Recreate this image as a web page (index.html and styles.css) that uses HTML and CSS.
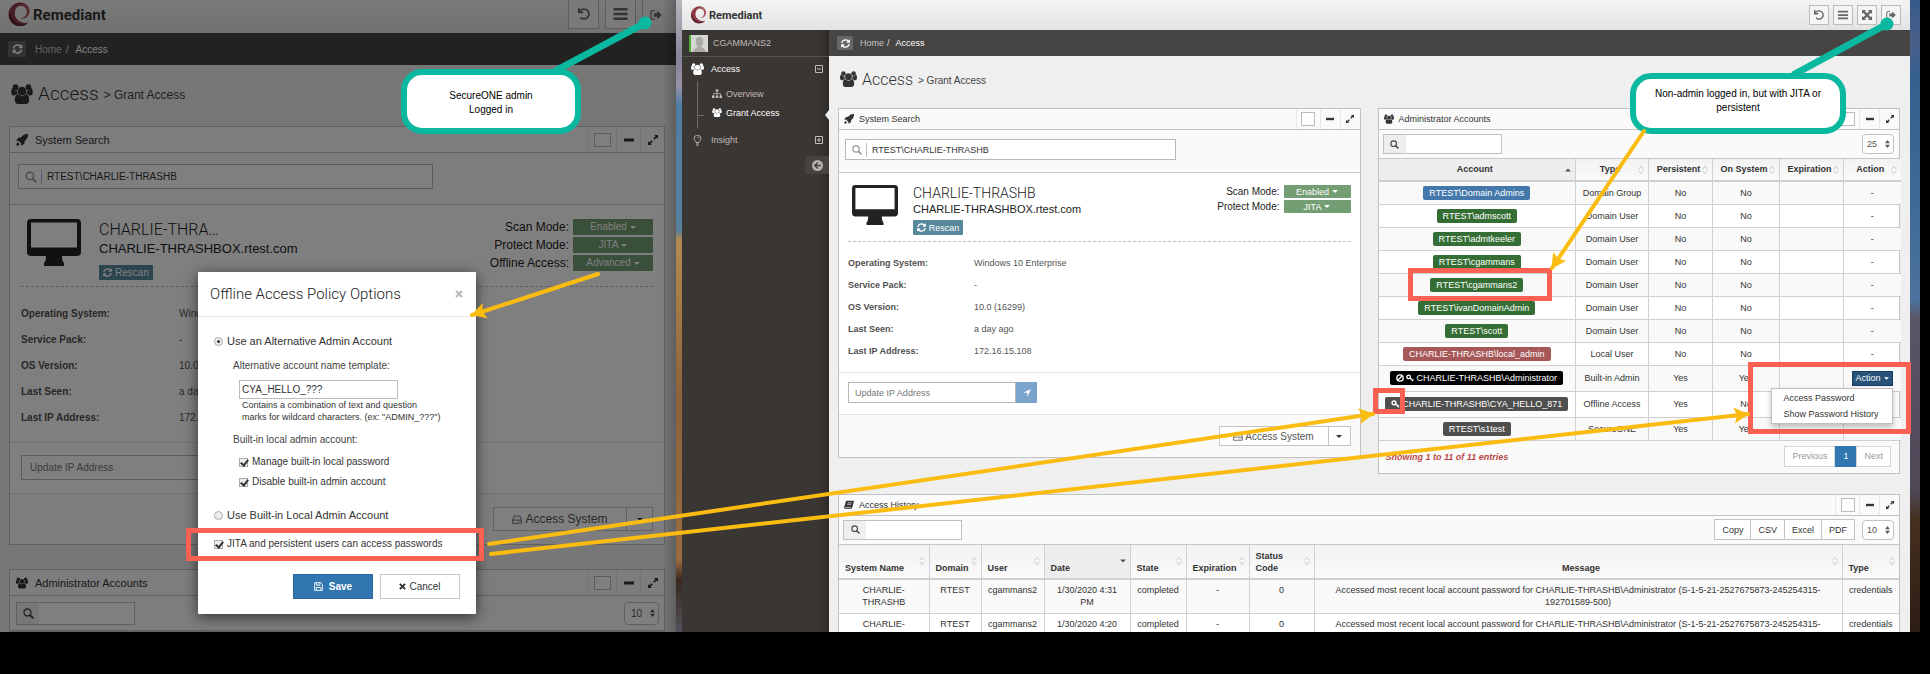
FILE: index.html
```html
<!DOCTYPE html>
<html lang="en">
<head>
<meta charset="utf-8">
<title>Remediant SecureONE - Grant Access</title>
<link rel="stylesheet" href="styles.css">
</head>
<body>
<svg class="sprite" aria-hidden="true">
  <symbol id="i-logo" viewBox="0 0 44 50">
    <path fill="#8d3a44" d="M40 9C34 0 22-1 13 4 3 10-1 20 2 31c3 11 13 18 24 17 6 0 11-3 14-7-5 2-10 1-14-1-9-4-14-12-12-21C15 10 24 4 32 5c3 1 6 2 8 4z"/>
    <path fill="#5e2a33" d="M2 31c3 11 13 18 24 17 6 0 11-3 14-7-7 4-16 4-23 0C9 37 6 30 7 22c-4 2-6 5-5 9z"/>
    <path fill="#a8505a" d="M40 9c4 5 4 12 1 17-3 6-10 9-16 7 6-1 10-4 12-9 2-6 0-12-5-15-4-2-8-2-12 1 3-6 14-8 20-1z"/>
  </symbol>
  <symbol id="i-users" viewBox="0 0 30 28">
    <circle cx="6" cy="4.500" r="4"/><circle cx="24" cy="4.500" r="4"/><circle cx="15" cy="10" r="6"/>
    <path d="M5 23c0-5 1-8.500 5-8.500 1 1 3 2.500 5 2.500s4-1.500 5-2.500c4 0 5 3.500 5 8.500 0 3-2 5-4 5H9c-2 0-4-2-4-5z"/>
    <path d="M0 12c0-3 .5-6 2.200-6 1 1 2.300 3 4 3 .5 0 1-.1 1.700-.3-.3 2 .3 4 1.400 5.600-2 0-3.600.7-4.900 1.700H3c-2 0-3-1.200-3-4zM30 12c0-3-.5-6-2.200-6-1 1-2.300 3-4 3-.5 0-1-.1-1.700-.3.3 2-.3 4-1.400 5.600 2 0 3.600.7 4.900 1.700H27c2 0 3-1.200 3-4z"/>
  </symbol>
  <symbol id="i-sync" viewBox="0 0 512 512"><path d="M370.720 133.280C339.458 104.008 298.888 87.962 255.848 88c-77.458.068-144.328 53.178-162.791 126.850-1.344 5.363-6.122 9.150-11.651 9.150H24.103c-7.498 0-13.194-6.807-11.807-14.176C33.933 94.924 134.813 8 256 8c66.448 0 126.791 26.136 171.315 68.685L463.030 40.970C478.149 25.851 504 36.559 504 57.941V192c0 13.255-10.745 24-24 24H345.941c-21.382 0-32.090-25.851-16.971-40.971l41.750-41.749zM32 296h134.059c21.382 0 32.090 25.851 16.971 40.971l-41.750 41.750c31.262 29.273 71.835 45.319 114.876 45.280 77.418-.07 144.315-53.144 162.787-126.849 1.344-5.363 6.122-9.150 11.651-9.150h57.304c7.498 0 13.194 6.807 11.807 14.176C478.067 417.076 377.187 504 256 504c-66.448 0-126.791-26.136-171.315-68.685L48.970 471.030C33.851 486.149 8 475.441 8 454.059V320c0-13.255 10.745-24 24-24z"/></symbol>
  <symbol id="i-undo" viewBox="0 0 512 512"><path d="M212.333 224.333H12c-6.627 0-12-5.373-12-12V12C0 5.373 5.373 0 12 0h48c6.627 0 12 5.373 12 12v78.112C117.773 39.279 184.260 7.470 258.175 8.007c136.906.994 246.448 111.623 246.157 248.532C504.041 393.258 393.120 504 256.333 504c-64.089 0-122.496-24.313-166.510-64.215-5.099-4.622-5.334-12.554-.467-17.420l33.967-33.967c4.474-4.474 11.662-4.717 16.401-.525C170.760 415.336 211.580 432 256.333 432c97.268 0 176-78.716 176-176 0-97.267-78.716-176-176-176-58.496 0-110.280 28.476-142.274 72.333h98.274c6.627 0 12 5.373 12 12v48c0 6.627-5.373 12-12 12z"/></symbol>
  <symbol id="i-bars" viewBox="0 0 14 14"><path d="M0 1h14v2.500H0zM0 5.800h14v2.500H0zM0 10.600h14v2.500H0z"/></symbol>
  <symbol id="i-arrows" viewBox="0 0 14 14"><path d="M0 0h5.500L4 1.700l3 3 3-3L8.500 0H14v5.500l-1.700-1.500-3 3 3 3L14 8.500V14H8.500l1.500-1.700-3-3-3 3L5.500 14H0V8.500L1.700 10l3-3-3-3L0 5.500z"/></symbol>
  <symbol id="i-signout" viewBox="0 0 14 14"><path fill="none" stroke="currentColor" stroke-width="1.400" d="M5.500 2H3C1.700 2 1 2.700 1 4v6c0 1.300.7 2 2 2h2.500"/><path d="M4.500 5H8.500V2L13.800 7 8.500 12V9H4.500z"/></symbol>
  <symbol id="i-rocket" viewBox="0 0 16 16"><path d="M16 0c-4-.2-7 1.200-9.500 4.500L2.800 5 .3 9.200l3-.3 3.800 3.800-.3 3L11 13.200l.5-3.700C14.800 7 16.200 4 16 0zM2.500 11C1 12 .5 13.800.5 15.500 2.200 15.500 4 15 5 13.500z"/></symbol>
  <symbol id="i-search" viewBox="0 0 16 16"><g fill="none" stroke="currentColor" stroke-width="2"><circle cx="6.500" cy="6.500" r="5"/><path stroke-width="2.800" stroke-linecap="round" d="M10.600 10.600 14.200 14.200"/></g></symbol>
  <symbol id="i-desktop" viewBox="0 0 54 47"><path fill-rule="evenodd" d="M4 0h46a4 4 0 0 1 4 4v29a4 4 0 0 1-4 4H35c0 4 1 6 2 7v3H17v-3c1-1 2-3 2-7H4a4 4 0 0 1-4-4V4a4 4 0 0 1 4-4zM4 3.500V28.500H50V3.500z"/></symbol>
  <symbol id="i-expand" viewBox="0 0 14 14"><path d="M8.500 0H14v5.500l-1.900-1.900-3.100 3.100-1.700-1.700 3.100-3.100zM5.500 14H0V8.500l1.900 1.900L5 7.300 6.700 9l-3.100 3.100z"/></symbol>
  <symbol id="i-minus" viewBox="0 0 10 10"><path d="M0 3.500h10v3H0z"/></symbol>
  <symbol id="i-caret" viewBox="0 0 8 4"><path d="M0 0h8L4 4z"/></symbol>
  <symbol id="i-caretup" viewBox="0 0 8 4"><path d="M0 4h8L4 0z"/></symbol>
  <symbol id="i-sort" viewBox="0 0 8 12"><path fill="none" stroke="currentColor" d="M1 5 4 1l3 4M1 7l3 4 3-4"/></symbol>
  <symbol id="i-updown" viewBox="0 0 6 10"><path d="M0 4h6L3 0zM0 6h6L3 10z"/></symbol>
  <symbol id="i-save" viewBox="0 0 14 14"><path fill="none" stroke="currentColor" stroke-width="1.400" d="M1 1h9.500L13 3.500V13H1zM4 1v4h5V1M3.500 13V8.500h7V13"/></symbol>
  <symbol id="i-times" viewBox="0 0 12 12"><path fill="none" stroke="currentColor" stroke-width="3.400" d="M1.500 1.500 10.500 10.500M10.500 1.500 1.500 10.500"/></symbol>
  <symbol id="i-hdd" viewBox="0 0 16 14"><path fill="none" stroke="currentColor" stroke-width="1.300" d="M1 8 3.500 1.500h9L15 8v5H1zM1 8h14M10 10.500h1.200M12.300 10.500h1.200"/></symbol>
  <symbol id="i-nav" viewBox="0 0 14 14"><path d="M14 0 7.500 14V6.500H0z"/></symbol>
  <symbol id="i-book" viewBox="0 0 16 14"><path d="M5 0h9c1.500 0 2 .8 1.700 2L13 11.500c-.2 1-1 1.500-2 1.500H2.500C1 13 0 12 .3 10.500L2.800 2C3.200.8 3.800 0 5 0z"/><path stroke="#fff" fill="none" d="M5.800 3.500h6.500M5 6h6.500M2 10.800h9"/></symbol>
  <symbol id="i-sitemap" viewBox="0 0 16 14"><path d="M6 0h4v4H8.600v2.400H14V10h2v4h-4v-4h.8V7.600H8.600V10H10v4H6v-4h1.400V7.600H3.200V10H4v4H0v-4h2V6.400h5.400V4H6z"/></symbol>
  <symbol id="i-bulb" viewBox="0 0 12 16"><path fill="none" stroke="currentColor" stroke-width="1.300" d="M4 11C4 8.500 1 8 1 5a5 4.500 0 0 1 10 0c0 3-3 3.500-3 6zM4 13h4M4.500 15h3M6 3.500c1 0 2 .5 2 1.500"/></symbol>
  <symbol id="i-circleleft" viewBox="0 0 16 16"><circle cx="8" cy="8" r="8"/><path fill="none" stroke="#464341" stroke-width="2" d="M8.500 3.500 4 8l4.500 4.500M4 8h9"/></symbol>
  <symbol id="i-ban" viewBox="0 0 12 12"><g fill="none" stroke="currentColor" stroke-width="2"><circle cx="6" cy="6" r="4.800"/><path d="M9.500 2.500 2.500 9.500"/></g></symbol>
  <symbol id="i-key" viewBox="0 0 14 13"><path fill="none" stroke="currentColor" stroke-width="2.400" d="M4.500 1.500a3 3 0 1 1 0 6.200 3 3 0 0 1 0-6.200z"/><path fill="none" stroke="currentColor" stroke-width="1.800" d="M6.500 6.500 12.500 12M9 9l2-2M11 11l2-2"/></symbol>
  <symbol id="i-boxminus" viewBox="0 0 8 8"><path fill="none" stroke="currentColor" d="M.5.5h7v7h-7zM2 4h4"/></symbol>
  <symbol id="i-boxplus" viewBox="0 0 8 8"><path fill="none" stroke="currentColor" d="M.5.5h7v7h-7zM2 4h4M4 2v4"/></symbol>
  <symbol id="i-avatar" viewBox="0 0 18 18"><path fill="#d5d5d2" d="M0 0h18v18H0z"/><path fill="#aaa9a6" d="M9 2c3 0 4 2 4 5s-1 4-2 5c0 2 4 2 5 6H2c1-4 5-4 5-6-1-1-2-2-2-5s1-5 4-5z"/></symbol>
</svg>

<main class="desktop">
  <section class="window window--admin" aria-label="SecureONE admin">
    <header class="topbar">
      <a class="brand" href="#"><svg class="brand-mark"><use href="#i-logo"/></svg>Remediant</a>
      <nav class="topbar-actions">
        <button aria-label="Reset"><svg><use href="#i-undo"/></svg></button>
        <button aria-label="Menu"><svg class="wide"><use href="#i-bars"/></svg></button>
        <button class="flat" aria-label="Sign out"><svg><use href="#i-signout"/></svg></button>
      </nav>
    </header>
    <div class="main">
      <div class="ribbon">
        <button class="refresh" aria-label="Refresh"><svg><use href="#i-sync"/></svg></button>
        <a href="#">Home</a><span>/</span><a class="here" href="#">Access</a>
      </div>
      <div class="content">
        <h1 class="page-title"><svg><use href="#i-users"/></svg>Access <small>&gt; Grant Access</small></h1>
        <article class="panel">
          <header class="panel-head">
            <svg><use href="#i-rocket"/></svg><h2>System Search</h2>
            <span class="tool"><input type="checkbox" aria-label="Panel color"></span>
            <button class="tool" aria-label="Collapse"><svg><use href="#i-minus"/></svg></button>
            <button class="tool" aria-label="Expand"><svg><use href="#i-expand"/></svg></button>
          </header>
          <div class="finder"><label class="finder-box"><svg><use href="#i-search"/></svg><input type="text" value="RTEST\CHARLIE-THRASHB" aria-label="System"></label></div>
          <div class="system">
            <div class="system-head">
              <svg class="monitor"><use href="#i-desktop"/></svg>
              <div class="system-name"><h3>CHARLIE-THRA…</h3><p>CHARLIE-THRASHBOX.rtest.com</p><button class="rescan"><svg><use href="#i-sync"/></svg>Rescan</button></div>
              <div class="modes">
                <span>Scan Mode:</span><button>Enabled<svg><use href="#i-caret"/></svg></button>
                <span>Protect Mode:</span><button>JITA<svg><use href="#i-caret"/></svg></button>
                <span>Offline Access:</span><button>Advanced<svg><use href="#i-caret"/></svg></button>
              </div>
            </div>
            <dl class="facts">
              <dt>Operating System:</dt><dd>Windows 10 Enterprise</dd>
              <dt>Service Pack:</dt><dd>-</dd>
              <dt>OS Version:</dt><dd>10.0 (16299)</dd>
              <dt>Last Seen:</dt><dd>a day ago</dd>
              <dt>Last IP Address:</dt><dd>172.16.15.108</dd>
            </dl>
          </div>
          <div class="ip-row"><input type="text" placeholder="Update IP Address" aria-label="Update IP Address"><button aria-label="Send"><svg><use href="#i-nav"/></svg></button></div>
          <footer class="panel-foot"><button class="access"><svg><use href="#i-hdd"/></svg>Access System</button><button class="drop" aria-label="More"><svg><use href="#i-caret"/></svg></button></footer>
        </article>
        <article class="panel">
          <header class="panel-head">
            <svg><use href="#i-users"/></svg><h2>Administrator Accounts</h2>
            <span class="tool"><input type="checkbox" aria-label="Panel color"></span>
            <button class="tool" aria-label="Collapse"><svg><use href="#i-minus"/></svg></button>
            <button class="tool" aria-label="Expand"><svg><use href="#i-expand"/></svg></button>
          </header>
          <div class="toolbar">
            <label class="filter"><span><svg><use href="#i-search"/></svg></span><input type="text" aria-label="Filter"></label>
            <label class="count"><select aria-label="Rows"><option>10</option></select><svg><use href="#i-updown"/></svg></label>
          </div>
        </article>
      </div>
    </div>
    <div class="backdrop"></div>
    <form class="modal" role="dialog" aria-label="Offline Access Policy Options">
      <header><h2>Offline Access Policy Options</h2><button type="button" aria-label="Close"><svg><use href="#i-times"/></svg></button></header>
      <label class="opt opt--main"><input type="radio" name="policy" checked>Use an Alternative Admin Account</label>
      <label class="sub" for="template">Alternative account name template:</label>
      <input class="template" id="template" type="text" value="CYA_HELLO_???">
      <p class="hint">Contains a combination of text and question<br>marks for wildcard characters. (ex: "ADMIN_???")</p>
      <p class="sub">Built-in local admin account:</p>
      <label class="opt opt--nested"><input type="checkbox" checked>Manage built-in local password</label>
      <label class="opt opt--nested"><input type="checkbox" checked>Disable built-in admin account</label>
      <label class="opt opt--second opt--main"><input type="radio" name="policy">Use Built-in Local Admin Account</label>
      <label class="opt opt--jita"><input type="checkbox" checked>JITA and persistent users can access passwords</label>
      <footer><button type="button" class="save"><svg><use href="#i-save"/></svg>Save</button><button type="button" class="cancel"><svg><use href="#i-times"/></svg>Cancel</button></footer>
    </form>
  </section>

  <div class="wallpaper wallpaper--gap"></div>

  <section class="window window--user" aria-label="Non-admin user">
    <header class="topbar">
      <a class="brand" href="#"><svg class="brand-mark"><use href="#i-logo"/></svg>Remediant</a>
      <nav class="topbar-actions">
        <button aria-label="Reset"><svg><use href="#i-undo"/></svg></button>
        <button aria-label="Menu"><svg><use href="#i-bars"/></svg></button>
        <button aria-label="Full screen"><svg><use href="#i-arrows"/></svg></button>
        <button aria-label="Sign out"><svg><use href="#i-signout"/></svg></button>
      </nav>
    </header>
    <aside class="sidebar">
      <div class="user"><svg><use href="#i-avatar"/></svg>CGAMMANS2</div>
      <nav>
        <a class="item on" href="#"><svg><use href="#i-users"/></svg>Access<svg class="toggle"><use href="#i-boxminus"/></svg></a>
        <div class="branch">
          <a href="#"><svg><use href="#i-sitemap"/></svg>Overview</a>
          <a class="on" href="#"><svg><use href="#i-users"/></svg>Grant Access</a>
        </div>
        <a class="item" href="#"><svg class="bulb"><use href="#i-bulb"/></svg>Insight<svg class="toggle"><use href="#i-boxplus"/></svg></a>
      </nav>
      <button class="minify" aria-label="Collapse menu"><svg><use href="#i-circleleft"/></svg></button>
    </aside>
    <div class="main">
      <div class="ribbon">
        <button class="refresh" aria-label="Refresh"><svg><use href="#i-sync"/></svg></button>
        <a href="#">Home</a><span>/</span><a class="here" href="#">Access</a>
      </div>
      <div class="content">
        <h1 class="page-title"><svg><use href="#i-users"/></svg>Access <small>&gt; Grant Access</small></h1>
        <div class="columns">
          <article class="panel">
            <header class="panel-head">
              <svg><use href="#i-rocket"/></svg><h2>System Search</h2>
              <span class="tool"><input type="checkbox" aria-label="Panel color"></span>
              <button class="tool" aria-label="Collapse"><svg><use href="#i-minus"/></svg></button>
              <button class="tool" aria-label="Expand"><svg><use href="#i-expand"/></svg></button>
            </header>
            <div class="finder"><label class="finder-box"><svg><use href="#i-search"/></svg><input type="text" value="RTEST\CHARLIE-THRASHB" aria-label="System"></label></div>
            <div class="system">
              <div class="system-head">
                <svg class="monitor"><use href="#i-desktop"/></svg>
                <div class="system-name"><h3>CHARLIE-THRASHB</h3><p>CHARLIE-THRASHBOX.rtest.com</p><button class="rescan"><svg><use href="#i-sync"/></svg>Rescan</button></div>
                <div class="modes">
                  <span>Scan Mode:</span><button>Enabled<svg><use href="#i-caret"/></svg></button>
                  <span>Protect Mode:</span><button>JITA<svg><use href="#i-caret"/></svg></button>
                </div>
              </div>
              <dl class="facts">
                <dt>Operating System:</dt><dd>Windows 10 Enterprise</dd>
                <dt>Service Pack:</dt><dd>-</dd>
                <dt>OS Version:</dt><dd>10.0 (16299)</dd>
                <dt>Last Seen:</dt><dd>a day ago</dd>
                <dt>Last IP Address:</dt><dd>172.16.15.108</dd>
              </dl>
            </div>
            <div class="ip-row"><input type="text" placeholder="Update IP Address" aria-label="Update IP Address"><button aria-label="Send"><svg><use href="#i-nav"/></svg></button></div>
            <footer class="panel-foot"><button class="access"><svg><use href="#i-hdd"/></svg>Access System</button><button class="drop" aria-label="More"><svg><use href="#i-caret"/></svg></button></footer>
          </article>

          <article class="panel">
            <header class="panel-head">
              <svg><use href="#i-users"/></svg><h2>Administrator Accounts</h2>
              <span class="tool"><input type="checkbox" aria-label="Panel color"></span>
              <button class="tool" aria-label="Collapse"><svg><use href="#i-minus"/></svg></button>
              <button class="tool" aria-label="Expand"><svg><use href="#i-expand"/></svg></button>
            </header>
            <div class="toolbar">
              <label class="filter"><span><svg><use href="#i-search"/></svg></span><input type="text" aria-label="Filter"></label>
              <label class="count"><select aria-label="Rows"><option>25</option></select><svg><use href="#i-updown"/></svg></label>
            </div>
            <table class="grid accounts">
              <colgroup><col class="a1"><col class="a2"><col class="a3"><col class="a4"><col class="a5"><col class="a6"></colgroup>
              <thead><tr><th class="sorted">Account<svg class="up"><use href="#i-caretup"/></svg></th><th>Type<svg><use href="#i-sort"/></svg></th><th>Persistent<svg><use href="#i-sort"/></svg></th><th>On System<svg><use href="#i-sort"/></svg></th><th>Expiration<svg><use href="#i-sort"/></svg></th><th>Action<svg><use href="#i-sort"/></svg></th></tr></thead>
              <tbody>
                <tr><td><span class="tag blue">RTEST\Domain Admins</span></td><td>Domain Group</td><td>No</td><td>No</td><td></td><td>-</td></tr>
                <tr><td><span class="tag green">RTEST\admscott</span></td><td>Domain User</td><td>No</td><td>No</td><td></td><td>-</td></tr>
                <tr><td><span class="tag green">RTEST\admtkeeler</span></td><td>Domain User</td><td>No</td><td>No</td><td></td><td>-</td></tr>
                <tr><td><span class="tag green">RTEST\cgammans</span></td><td>Domain User</td><td>No</td><td>No</td><td></td><td>-</td></tr>
                <tr><td><span class="tag green">RTEST\cgammans2</span></td><td>Domain User</td><td>No</td><td>No</td><td></td><td>-</td></tr>
                <tr><td><span class="tag green">RTEST\ivanDomainAdmin</span></td><td>Domain User</td><td>No</td><td>No</td><td></td><td>-</td></tr>
                <tr><td><span class="tag green">RTEST\scott</span></td><td>Domain User</td><td>No</td><td>No</td><td></td><td>-</td></tr>
                <tr><td><span class="tag red">CHARLIE-THRASHB\local_admin</span></td><td>Local User</td><td>No</td><td>No</td><td></td><td>-</td></tr>
                <tr class="tall"><td><span class="tag black"><svg><use href="#i-ban"/></svg><svg><use href="#i-key"/></svg>CHARLIE-THRASHB\Administrator</span></td><td>Built-in Admin</td><td>Yes</td><td>Yes</td><td></td>
                  <td><div class="action"><button>Action<svg><use href="#i-caret"/></svg></button><div class="menu"><a href="#">Access Password</a><a href="#">Show Password History</a></div></div></td></tr>
                <tr class="tall"><td><span class="tag gray"><svg class="key"><use href="#i-key"/></svg>CHARLIE-THRASHB\CYA_HELLO_871</span></td><td>Offline Access</td><td>Yes</td><td>No</td><td></td><td></td></tr>
                <tr><td><span class="tag gray">RTEST\s1test</span></td><td>SecureONE</td><td>Yes</td><td>Yes</td><td></td><td></td></tr>
              </tbody>
            </table>
            <footer class="table-foot"><em>Showing 1 to 11 of 11 entries</em>
              <nav class="pager"><a href="#">Previous</a><a class="current" href="#">1</a><a href="#">Next</a></nav></footer>
          </article>
        </div>

        <article class="panel">
          <header class="panel-head">
            <svg><use href="#i-book"/></svg><h2>Access History</h2>
            <span class="tool"><input type="checkbox" aria-label="Panel color"></span>
            <button class="tool" aria-label="Collapse"><svg><use href="#i-minus"/></svg></button>
            <button class="tool" aria-label="Expand"><svg><use href="#i-expand"/></svg></button>
          </header>
          <div class="toolbar">
            <label class="filter"><span><svg><use href="#i-search"/></svg></span><input type="text" aria-label="Filter"></label>
            <div class="exports"><button>Copy</button><button>CSV</button><button>Excel</button><button>PDF</button></div>
            <label class="count"><select aria-label="Rows"><option>10</option></select><svg><use href="#i-updown"/></svg></label>
          </div>
          <table class="grid history">
            <colgroup><col class="h1"><col class="h2"><col class="h3"><col class="h4"><col class="h5"><col class="h6"><col class="h7"><col class="h8"><col class="h9"></colgroup>
            <thead><tr><th>System Name<svg><use href="#i-sort"/></svg></th><th>Domain<svg><use href="#i-sort"/></svg></th><th>User<svg><use href="#i-sort"/></svg></th><th class="sorted">Date<svg class="up"><use href="#i-caret"/></svg></th><th>State<svg><use href="#i-sort"/></svg></th><th>Expiration<svg><use href="#i-sort"/></svg></th><th>Status<br>Code<svg><use href="#i-sort"/></svg></th><th class="mid">Message<svg><use href="#i-sort"/></svg></th><th>Type<svg><use href="#i-sort"/></svg></th></tr></thead>
            <tbody>
              <tr><td>CHARLIE-<br>THRASHB</td><td>RTEST</td><td>cgammans2</td><td>1/30/2020 4:31<br>PM</td><td>completed</td><td>-</td><td>0</td><td>Accessed most recent local account password for CHARLIE-THRASHB\Administrator (S-1-5-21-2527675873-245254315-<br>192701589-500)</td><td>credentials</td></tr>
              <tr><td>CHARLIE-</td><td>RTEST</td><td>cgammans2</td><td>1/30/2020 4:20</td><td>completed</td><td>-</td><td>0</td><td>Accessed most recent local account password for CHARLIE-THRASHB\Administrator (S-1-5-21-2527675873-245254315-</td><td>credentials</td></tr>
            </tbody>
          </table>
        </article>
      </div>
    </div>
  </section>

  <div class="wallpaper wallpaper--edge"></div>
</main>

<div class="notes">
  <svg class="note-lines" viewBox="0 0 1930 674" aria-hidden="true">
    <g fill="none" stroke="#fa6153" stroke-width="5">
      <rect x="188.500" y="530.500" width="293" height="28"/>
      <rect x="1410.500" y="270.500" width="139" height="28"/>
      <rect x="1375.500" y="390.500" width="27" height="21"/>
      <rect x="1750.500" y="364.500" width="158" height="67"/>
    </g>
    <g stroke="#0ab8a0" stroke-width="7" fill="#0ab8a0">
      <path d="M555 71 645 23M1793 75 1887 24"/>
      <circle cx="645" cy="23" r="3"/><circle cx="1887" cy="24" r="3"/>
    </g>
  </svg>
  <p class="callout callout--admin">SecureONE admin<br>Logged in</p>
  <p class="callout callout--user">Non-admin logged in, but with JITA or persistent</p>
  <svg class="note-lines" viewBox="0 0 1930 674" aria-hidden="true">
    <defs><marker id="tip" viewBox="0 0 15 16" refX="14" refY="8" markerWidth="15" markerHeight="16" markerUnits="userSpaceOnUse" orient="auto"><path fill="#fbbc12" d="M0 0 15 8 0 16 3 8z"/></marker></defs>
    <g fill="none" stroke="#fbbc12" stroke-width="4" stroke-linecap="round">
      <path marker-end="url(#tip)" d="M598 274 472 315"/>
      <path marker-end="url(#tip)" d="M489 544 1373 414"/>
      <path marker-end="url(#tip)" d="M491 554 1748 414"/>
      <path marker-end="url(#tip)" d="M1644 131 1552 268"/>
    </g>
  </svg>
</div>
</body>
</html>
```

FILE: styles.css
```css
* { box-sizing: border-box; }

body {
  margin: 0;
  height: 100vh;
  padding: 0 10px 42px 0;
  background: #000;
  font-family: "Liberation Sans", Arial, sans-serif;
  color: #333;
  position: relative;
  overflow: hidden;
}

h1, h2, h3, p, dl, dd { margin: 0; font-weight: 400; }
a { color: inherit; text-decoration: none; }
svg { fill: currentColor; flex: none; display: block; }
button, input, select { font: inherit; color: inherit; margin: 0; padding: 0; border-radius: 0; }
button { display: flex; align-items: center; justify-content: center; background: none; border: 0; }
input { min-width: 0; outline: 0; }
.sprite { position: absolute; width: 0; height: 0; }

.desktop {
  display: grid;
  grid-template-columns: minmax(0, 676fr) 6px minmax(0, 1228fr) 10px;
  grid-template-rows: minmax(0, 1fr);
  height: 100%;
}

.window { background: #efefef; overflow: hidden; position: relative; font-size: var(--fs); }

.window--admin {
  --fs: 10px; --title: 11px; --h1: 19px; --sub: 12px; --name: 16px; --host: 13px; --mode: 12px; --brand: 15px;
  --top: 33px; --ribbon: 32px; --hero: 61px; --head: 26px; --icon: 12px; --field: 25px;
  --finder: 52px; --pitch: 26px; --ctl: 23px; --bar: 35px; --foot: 51px; --gap: 24px; --ticks: 17px;
}

.window--user {
  --fs: 9px; --title: 9px; --h1: 16px; --sub: 10px; --name: 14px; --host: 11px; --mode: 10px; --brand: 11px;
  --top: 30px; --ribbon: 26px; --hero: 52px; --head: 21px; --icon: 10px; --field: 21px;
  --finder: 43px; --pitch: 22px; --ctl: 20px; --bar: 29px; --foot: 43px; --gap: 20px; --ticks: 14px;
  display: grid;
  grid-template: var(--top) minmax(0, 1fr) / 147px minmax(0, 1fr);
}

.wallpaper--gap { background: linear-gradient(#b7b7bc 0, #83839a 60px, #9a93a8 85px, #4f7ea5 105px, #567f9d 230px, #b58a4e 240px, #8a623b 400px, #9a6c3f 560px, #38281f 580px, #52525a 632px); }
.wallpaper--edge { background: linear-gradient(#355a8a 0, #4b5f8a 40px, #33608f 80px, #4a729c 300px, #5a5564 320px, #4e4857 490px, #46301f 520px, #2c1d15 632px); }

/* Top bar */
.topbar {
  height: var(--top);
  display: flex;
  align-items: center;
  justify-content: space-between;
  background: linear-gradient(#f4f4f4, #e3e3e3);
  padding-left: 8px;
  color: #666;
}
.window--user .topbar { grid-column: 1 / -1; padding-right: 9px; }
.brand { display: flex; align-items: center; gap: 2px; font: 700 var(--brand) Roboto, sans-serif; color: #333; }
.brand-mark { width: 17px; height: 18px; }
.window--admin .brand { padding-bottom: 4px; gap: 3px; }
.window--admin .brand-mark { width: 22px; height: 25px; }
.topbar-actions { display: flex; gap: 4px; }
.topbar-actions button { width: 20px; height: 20px; border: 1px solid #bbb; background: #f5f5f5; }
.topbar-actions svg { width: 10px; height: 10px; }
.window--admin .topbar-actions { gap: 6px; align-self: flex-start; padding-right: 8px; }
.window--admin .topbar-actions button { width: 31px; height: 29px; border-top: 0; }
.window--admin .topbar-actions svg { width: 12px; height: 12px; }
.window--admin .topbar-actions .wide { width: 15px; height: 14px; }
.window--admin .topbar-actions .flat { width: 26px; border-width: 0 0 0 1px; background: none; }

/* Sidebar */
.sidebar { background: #3a3633; color: #c0bbb7; box-shadow: inset -8px 0 8px -6px rgba(0, 0, 0, .4); }
.sidebar a { display: flex; align-items: center; }
.sidebar .on { color: #fff; }
.user { height: 27px; display: flex; align-items: center; gap: 5px; padding-left: 7px; border-bottom: 1px solid #55504c; }
.user svg { width: 19px; height: 17px; border-left: 2px solid #4fae33; }
.item { height: 24px; padding: 0 6px 0 9px; gap: 7px; }
.item svg { width: 13px; height: 12px; }
.item .bulb { height: 11px; }
.item .toggle { width: 8px; height: 8px; margin-left: auto; color: #c0bbb7; }
.branch { position: relative; height: 47px; margin-left: 15px; padding: 3px 0 0 14px; border-left: 1px solid #6d6864; }
.branch a { height: 19px; gap: 4px; }
.branch svg { width: 10px; height: 9px; }
.branch::before { content: ""; position: absolute; left: 0; top: 34px; width: 6px; border-top: 1px solid #6d6864; }
.branch::after { content: ""; position: absolute; right: 0; top: 29px; border: 5px solid transparent; border-right: 4px solid #efefef; border-left: 0; }
.minify { width: 24px; height: 18px; margin: 4px 0 0 auto; background: #464341; color: #b5b1ad; border-radius: 3px 0 0 3px; }
.minify svg { width: 11px; height: 11px; }

/* Ribbon and page title */
.ribbon { height: var(--ribbon); background: #474544; color: #c4c2c1; display: flex; align-items: center; padding-left: 8px; gap: 3px; }
.ribbon .here { color: #fff; margin-left: 3px; }
.ribbon span { color: #ddd; }
.refresh { width: 16px; height: 14px; background: #686664; color: #fff; margin-right: 4px; }
.refresh svg { width: 9px; height: 9px; }
.window--admin .refresh { width: 18px; height: 16px; margin-right: 5px; }
.window--admin .refresh svg { width: 11px; height: 10px; }
.window--admin .ribbon { gap: 4px; }
.content { padding: 0 10px 0 9px; }
.page-title { height: var(--hero); display: flex; align-items: center; gap: 5px; padding: 0 0 6px 2px; font-family: Roboto, sans-serif; font-weight: 300; font-size: var(--h1); color: #333; }
.page-title small { font-family: "Liberation Sans", Arial, sans-serif; font-size: var(--sub); padding-top: 2px; color: #444; }
.page-title svg { width: 17px; height: 16px; }
.window--admin .page-title svg { width: 22px; height: 20px; }
.window--admin .page-title { padding-bottom: 4px; }
.columns { display: grid; grid-template-columns: minmax(0, 1fr) minmax(0, 1fr); gap: 17px; align-items: start; margin-bottom: var(--gap); }

/* Panels */
.panel { border: 1px solid #c2c2c2; background: #fff; }
.window--admin .panel { margin-bottom: var(--gap); margin-right: 1px; }
.panel-head { height: var(--head); display: flex; align-items: center; border-bottom: 1px solid #c2c2c2; background: #fafafa; padding-left: 5px; }
.panel-head > svg { width: var(--icon); height: var(--icon); margin-right: 5px; }
.window--admin .panel-head { padding-left: 6px; }
.window--admin .panel-head > svg { margin-right: 7px; }
.panel-head h2 { font-size: var(--title); flex: 1; }
.tool { align-self: stretch; width: 20px; display: flex; align-items: center; justify-content: center; border-left: 1px solid #e8e8e8; }
span.tool { width: 24px; }
.tool svg { width: 8px; height: 8px; }
.window--admin .tool { width: 24px; }
.window--admin span.tool { width: 29px; }
.window--admin .tool svg { width: 10px; height: 10px; }
.tool input { appearance: none; width: var(--ticks); height: 14px; border: 1px solid #bbb; background: #fff; }

.finder { height: var(--finder); padding: 9px 6px 0; background: #fafafa; border-bottom: 1px solid #c9c9c9; }
.window--admin .finder { padding: 11px 8px 0; }
.finder-box { display: flex; align-items: center; width: 65%; height: var(--field); border: 1px solid #b8b8b8; background: #fff; padding-left: 6px; }
.finder-box svg { width: var(--icon); height: var(--icon); color: #999; }
.finder-box input { flex: 1; border: 0; border-left: 1px solid #bdbdbd; background: none; margin-left: 4px; padding: 2px 5px; }

.system { padding: 0 9px; }
.window--admin .system { padding: 0 11px; }
.system-head { display: flex; align-items: flex-start; height: 69px; padding: 12px 0 0 4px; border-bottom: 1px dashed #c0c0c0; }
.monitor { width: 46px; height: 40px; margin-right: 15px; color: #222; }
.system-name { flex: 1; color: #222; }
.system-name h3 { font-family: Roboto, sans-serif; font-weight: 300; font-size: var(--name); line-height: 17px; }
.system-name p { font-size: var(--host); line-height: 14px; margin-bottom: 4px; }
.rescan { height: 15px; width: 50px; gap: 3px; background: #57889c; color: #fff; border-radius: 1px; }
.rescan svg { width: 9px; height: 9px; }
.window--admin .system-head { height: 82px; padding: 14px 0 0 6px; }
.window--admin .monitor { width: 54px; height: 47px; margin-right: 18px; }
.window--admin .system-name h3 { line-height: 21px; }
.window--admin .system-name p { line-height: 18px; margin-bottom: 7px; }
.window--admin .rescan { width: 54px; }
.modes { display: grid; grid-template-columns: auto 67px; column-gap: 4px; row-gap: 2px; font-size: var(--mode); line-height: 13px; text-align: right; color: #222; }
.modes button { font-size: var(--fs); line-height: 12px; background: #739e73; color: #fff; border-radius: 1px; gap: 3px; }
.modes svg { width: 6px; height: 3px; }
.window--admin .modes { grid-template-columns: auto 80px; line-height: 16px; }
.facts { display: grid; grid-template-columns: 126px 1fr; grid-auto-rows: var(--pitch); align-items: center; padding: 10px 0; color: #555; }
.facts dt { font-weight: 700; color: #505050; }
.window--admin .facts { grid-template-columns: 158px 1fr; padding: 13px 0 12px; }
.ip-row { display: flex; padding: 9px 9px 11px; border-top: 1px solid #e2e2e2; }
.ip-row input { width: 168px; height: var(--field); border: 1px solid #b8b8b8; padding: 0 6px; }
.ip-row input::placeholder { color: #777; opacity: 1; }
.ip-row button { width: 21px; height: var(--field); background: #7ba4cd; color: #fff; }
.ip-row svg { width: 8px; height: 8px; }
.window--admin .ip-row { padding: 12px 11px 13px; }
.window--admin .ip-row input { width: 204px; padding: 0 8px; }
.panel-foot { height: var(--foot); display: flex; align-items: center; justify-content: flex-end; padding: 0 9px; background: #fafafa; border-top: 1px solid #e2e2e2; color: #555; }
.panel-foot button { height: 20px; border: 1px solid #c3c3c3; background: #fff; }
.access { width: 110px; font-size: var(--mode); gap: 2px; }
.access svg { width: 10px; height: 9px; }
.drop { width: 23px; color: #333; margin-left: -1px; }
.drop svg { width: 6px; height: 3px; }
.window--admin .panel-foot { padding: 0 11px; }
.window--admin .panel-foot button { height: 24px; }
.window--admin .access { width: 134px; gap: 3px; }
.window--admin .drop { width: 27px; }

/* Tables */
.toolbar { height: var(--bar); display: flex; align-items: center; padding: 0 5px 0 4px; background: #fafafa; border-bottom: 1px solid #c6c6c6; }
.window--admin .toolbar { padding: 0 5px 0 6px; }
.filter { display: flex; width: 119px; height: var(--ctl); border: 1px solid #c0c0c0; background: #fff; margin-right: auto; }
.filter span { width: 22px; flex: none; background: #eee; display: flex; align-items: center; justify-content: center; }
.filter svg { width: 9px; height: 9px; color: #444; }
.filter input { flex: 1; border: 0; background: none; }
.window--admin .filter svg { width: 11px; height: 11px; }
.count { display: flex; align-items: center; width: 32px; height: var(--ctl); border: 1px solid #c0c0c0; border-radius: 4px; background: #fff; padding: 0 3px 0 4px; color: #555; }
.count select { appearance: none; border: 0; background: none; flex: 1; min-width: 0; outline: 0; }
.count svg { width: 5px; height: 8px; }
.window--admin .count { width: 35px; padding-left: 6px; }
.exports { display: flex; margin-right: 7px; }
.exports button { min-width: 33px; height: 21px; padding: 0 7px; border: 1px solid #c3c3c3; background: #fff; margin-left: -1px; }

.grid { width: 100%; table-layout: fixed; border-collapse: collapse; line-height: 12px; }
.grid th, .grid td { padding: 0; text-align: center; border-right: 1px solid #d0d0d0; border-bottom: 1px solid #d0d0d0; }
.grid th:last-child, .grid td:last-child { border-right: 0; }
.grid th { position: relative; background: linear-gradient(#f2f2f2, #fafafa); border-bottom: 2px solid #d0d0d0; padding-right: 4px; }
.grid th.sorted { background: #eee; }
.grid th svg { position: absolute; right: 4px; top: 0; bottom: 0; margin: auto; width: 6px; height: 10px; color: #bbb; }
.grid th .up { width: 6px; height: 4px; color: #555; }
.grid tbody tr { height: 23px; }
.grid tbody tr:nth-child(odd) { background: #f9f9f9; }
.grid tbody .tall { height: 26px; }
.grid.accounts th { height: 22px; padding-bottom: 1px; }
.a1 { width: 197px; } .a2 { width: 73px; } .a3 { width: 64px; } .a4 { width: 67px; } .a5 { width: 64px; }
.a6 { width: 57px; }

.tag { display: inline-flex; align-items: center; height: 14px; padding: 0 6px; border-radius: 2px; color: #fff; vertical-align: middle; }
.tag svg { width: 8px; height: 8px; margin-right: 2px; }
.tag .key { width: 9px; }
.blue { background: #4478ab; } .green { background: #356e35; } .red { background: #a65858; }
.black { background: #000; } .gray { background: #4f4f4f; }

.action { position: relative; width: 41px; margin: 0 8px 0 auto; }
.action button { width: 41px; height: 15px; background: #27527a; border: 1px solid #173f61; color: #fff; gap: 3px; }
.action button svg { width: 5px; height: 3px; }
.menu { position: absolute; right: 0; top: 17px; width: 122px; padding: 1px 0; background: #fff; border: 1px solid #c0c0c0; box-shadow: 0 3px 6px rgba(0, 0, 0, .25); text-align: left; z-index: 1; }
.menu a { display: block; padding: 2px 0 2px 12px; color: #333; }

.table-foot { display: flex; align-items: center; justify-content: space-between; height: 32px; padding: 0 8px 0 7px; background: #fafafa; }
.table-foot em { font-weight: 700; color: #b94a48; }
.pager { display: flex; color: #999; }
.pager a { height: 21px; line-height: 19px; padding: 0 7px; border: 1px solid #d5d5d5; background: #fff; }
.pager .current { background: #3276b1; border-color: #3276b1; color: #fff; }

.history th { height: 34px; padding: 0 0 4px 6px; text-align: left; vertical-align: bottom; }
.history .mid { text-align: center; }
.history td { vertical-align: top; padding: 4px 0 5px; }
.grid.history tbody tr { height: 35px; }
.h1 { width: 90px; } .h2 { width: 52px; } .h3 { width: 63px; } .h4 { width: 86px; } .h5 { width: 56px; }
.h6 { width: 63px; } .h7 { width: 65px; } .h9 { width: 57px; }

/* Modal */
.backdrop { position: absolute; inset: 0; background: linear-gradient(90deg, rgba(0, 0, 0, 0) 98%, rgba(0, 0, 0, .2)), rgba(0, 0, 0, .5); }
.modal { position: absolute; left: 198px; top: 272px; width: 278px; padding-bottom: 15px; background: #fff; border-radius: 1px; box-shadow: 0 3px 14px rgba(0, 0, 0, .6); display: flex; flex-direction: column; align-items: flex-start; line-height: 16px; }
.modal header { align-self: stretch; height: 45px; display: flex; align-items: center; justify-content: space-between; padding: 0 13px 0 12px; border-bottom: 1px solid #e5e5e5; margin-bottom: 16px; }
.modal header h2 { font-family: Roboto, sans-serif; font-weight: 300; font-size: 15px; color: #222; }
.modal header button { color: #bbb; }
.modal header svg { width: 8px; height: 8px; }
.opt { display: flex; align-items: center; gap: 4px; height: 16px; margin-left: 16px; }
.opt--main { font-size: var(--title); }
.opt--nested { margin: 6px 0 0 41px; }
.opt--nested + .opt--nested { margin-top: 4px; }
.opt--second { margin-top: 17px; }
.opt--jita { margin-top: 13px; }
.opt input { appearance: none; width: 9px; height: 9px; border: 1px solid #aaa; background: #eee; position: relative; }
.opt input[type="radio"] { border-radius: 50%; }
.opt input[type="radio"]:checked::before { content: ""; position: absolute; inset: 2px; border-radius: 50%; background: #333; }
.opt input[type="checkbox"]:checked::before { content: ""; position: absolute; left: 2px; top: -1px; width: 3px; height: 6px; border: solid #333; border-width: 0 2px 2px 0; transform: rotate(38deg); }
.sub { margin: 9px 0 0 35px; color: #444; }
.template { width: 159px; height: 19px; margin: 6px 0 0 41px; border: 1px solid #bbb; padding: 0 2px; }
.hint { margin-left: 44px; font-size: 9px; line-height: 12px; }
.modal footer { align-self: flex-end; display: flex; gap: 7px; margin: 22px 16px 0 0; }
.modal footer button { width: 80px; height: 25px; gap: 6px; border: 1px solid #c6c6c6; }
.modal footer .save { background: #3276b1; border-color: #2c699d; color: #fff; font-weight: 700; }
.modal footer .cancel { gap: 3px; }
.modal footer svg { width: 9px; height: 9px; }
.modal footer .cancel svg { width: 7px; height: 7px; }

/* Annotations */
.notes { position: absolute; inset: 0; pointer-events: none; }
.note-lines { position: absolute; left: 0; top: 0; width: 1930px; height: 674px; }
.callout { position: absolute; border: 6px solid #0ab8a0; border-radius: 21px; background: #fff; color: #000; font-size: 10px; line-height: 14px; text-align: center; padding: 14px 20px; }
.callout--admin { left: 401px; top: 69px; width: 180px; height: 65px; }
.callout--user { left: 1630px; top: 73px; width: 216px; height: 61px; padding: 8px 12px; }
```
